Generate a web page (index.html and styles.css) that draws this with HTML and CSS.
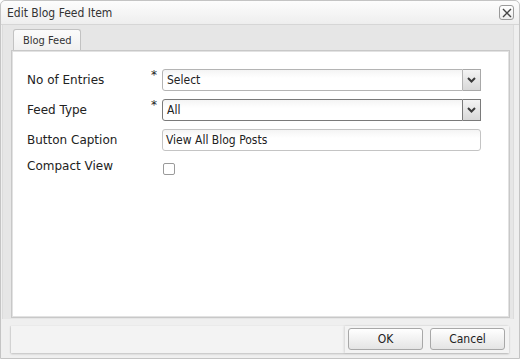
FILE: index.html
```html
<!DOCTYPE html>
<html>
<head>
<meta charset="utf-8">
<link rel="stylesheet" href="styles.css">
</head>
<body>
<div class="window">
  <div class="titlebar">
    <span class="title">Edit Blog Feed Item</span>
    <span class="close"><svg width="10" height="10" viewBox="0 0 10 10"><path d="M1 1 L9 9 M9 1 L1 9" stroke="#444" stroke-width="1.4" fill="none"/></svg></span>
  </div>
  <div class="body">
    <div class="tabs"><div class="tab">Blog Feed</div></div>
    <div class="panel">
      <div class="form">
        <div class="row">
          <span class="label">No of Entries</span>
          <span class="req">*</span>
          <div class="select"><span class="value">Select</span><span class="arrow"><svg width="9" height="6" viewBox="0 0 9 6"><path d="M1 1 L4.5 4.5 L8 1" stroke="#3a3a3a" stroke-width="2" fill="none"/></svg></span></div>
        </div>
        <div class="row">
          <span class="label">Feed Type</span>
          <span class="req">*</span>
          <div class="select dark"><span class="value">All</span><span class="arrow"><svg width="9" height="6" viewBox="0 0 9 6"><path d="M1 1 L4.5 4.5 L8 1" stroke="#3a3a3a" stroke-width="2" fill="none"/></svg></span></div>
        </div>
        <div class="row">
          <span class="label">Button Caption</span>
          <span class="req"></span>
          <div class="input">View All Blog Posts</div>
        </div>
        <div class="row check-row">
          <span class="label">Compact View</span>
          <span class="req"></span>
          <span class="checkbox"></span>
        </div>
      </div>
    </div>
  </div>
  <div class="footer">
    <div class="bar">
      <div class="buttons">
        <button class="btn">OK</button>
        <button class="btn">Cancel</button>
      </div>
    </div>
  </div>
</div>
</body>
</html>
```
FILE: styles.css
```css
* { box-sizing: border-box; }
html, body { margin: 0; padding: 0; background: #fff; }
body { font-family: "DejaVu Sans", Verdana, sans-serif; font-size: 12px; color: #222; }
.title, .tab, .value, .input, .btn {
  font-family: "DejaVu Sans Condensed", "DejaVu Sans", sans-serif;
}
.window {
  width: 520px; height: 359px;
  border: 1px solid #c4c4c4;
  border-radius: 5px 5px 0 0;
  background: #efefef;
  display: flex; flex-direction: column;
}
.titlebar {
  height: 24px;
  display: flex; align-items: center; justify-content: space-between;
  padding: 0 5px 0 6px;
  background: linear-gradient(#fdfdfd, #eeeeee);
  border-bottom: 1px solid #d6d6d6;
  border-radius: 5px 5px 0 0;
}
.title { font-size: 12px; color: #333; }
.close {
  width: 15px; height: 15px;
  border: 1px solid #9a9a9a; border-radius: 3px;
  background: linear-gradient(#ffffff, #ececec);
  display: flex; align-items: center; justify-content: center;
}
.body {
  flex: 1;
  margin: 0 5px 0 1px;
  border-left: 1px solid #dcdcdc;
  border-right: 1px solid #dcdcdc;
  background: #e6e6e6;
  padding: 4px 3px 0 8px;
  display: flex; flex-direction: column;
}
.tabs { display: flex; padding-left: 2px; height: 21px; position: relative; z-index: 1; }
.tab {
  width: 68px; height: 21px;
  border: 1px solid #c2c2c2; border-bottom: none;
  border-radius: 3px 3px 0 0;
  background: linear-gradient(#fbfbfb, #f0f0f0);
  padding: 4px 0 0 9px;
  font-size: 11px; color: #333; white-space: nowrap;
}
.panel {
  flex: 1;
  border: 1px solid #c8c8c8;
  box-shadow: inset 0 0 0 1px #e2e2e2;
  background: #fff;
  margin-bottom: 1px;
  padding: 18px 28px 0 15px;
}
.form { display: flex; flex-direction: column; gap: 8px; }
.row { display: flex; align-items: center; height: 22px; }
.label { width: 124px; font-size: 12px; color: #222; }
.req { width: 11px; font-size: 12px; align-self: flex-start; margin-top: -1px; }
.select { flex: 1; display: flex; height: 22px; }
.select .value {
  flex: 1;
  border: 1px solid #b4b4b4; border-radius: 3px 0 0 3px;
  background: linear-gradient(#f4f4f4, #ffffff 40%);
  padding: 3px 4px; font-size: 12px; color: #222;
}
.select.dark .value { border-color: #7a7a7a; }
.arrow {
  width: 18px;
  border: 1px solid #a8a8a8; border-left: none;
  background: linear-gradient(#f4f4f4, #d8d8d8);
  display: flex; align-items: center; justify-content: center;
}
.select.dark .arrow { border-color: #7a7a7a; }
.input {
  flex: 1; height: 22px;
  border: 1px solid #c4c4c4; border-radius: 3px;
  background: linear-gradient(#f4f4f4, #ffffff 40%);
  padding: 3px 3px; font-size: 12px; color: #222;
}
.check-row { height: 18px; margin-top: -2px; }
.checkbox {
  width: 12px; height: 12px; margin: 6px 0 0 1px;
  border: 1px solid #9a9a9a; border-radius: 2px; background: #fff;
}
.footer { height: 39px; padding: 7px 10px 0 10px; background: #efefef; }
.bar {
  height: 27px;
  background: #f3f3f3;
  box-shadow: 0 1px 2px rgba(0,0,0,0.2), -1px 0 1px rgba(0,0,0,0.06);
  display: flex; justify-content: flex-end;
}
.buttons {
  display: flex; gap: 7px; padding: 2px 4px 0 3px;
  box-shadow: -1px 0 2px rgba(0,0,0,0.12);
}
.btn {
  width: 75px; height: 22px;
  border: 1px solid #a8a8a8; border-radius: 3px;
  background: linear-gradient(#ffffff, #e4e4e4);
  font-size: 12px; color: #222;
  padding: 0;
}
```
